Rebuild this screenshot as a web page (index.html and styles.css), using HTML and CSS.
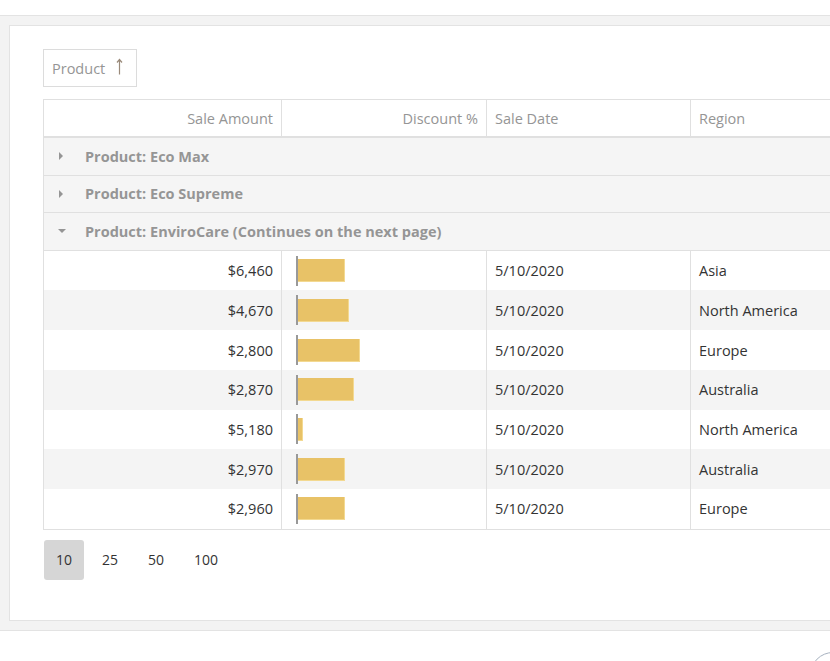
FILE: index.html
```html
<!DOCTYPE html>
<html>
<head>
<meta charset="utf-8">
<link rel="stylesheet" href="styles.css">
</head>
<body>
<div class="top"></div>
<div class="stage">
  <div class="panel">
    <div class="group-panel">
      <div class="group-chip">
        <span>Product</span>
        <svg class="sort" width="7" height="17" viewBox="0 0 7 17"><path d="M3.5 1.5V16.5M1 4.5L3.5 1.5L6 4.5" fill="none" stroke="#9a8a7a" stroke-width="1.2"/></svg>
      </div>
    </div>
    <table class="grid">
      <colgroup>
        <col class="c1"><col class="c2"><col class="c3"><col class="c4">
      </colgroup>
      <thead>
        <tr>
          <th class="r">Sale Amount</th>
          <th class="r">Discount %</th>
          <th>Sale Date</th>
          <th>Region</th>
        </tr>
      </thead>
      <tbody>
        <tr class="grp"><td colspan="4"><span class="tri right"></span>Product: Eco Max</td></tr>
        <tr class="grp"><td colspan="4"><span class="tri right"></span>Product: Eco Supreme</td></tr>
        <tr class="grp"><td colspan="4"><span class="tri down"></span>Product: EnviroCare (Continues on the next page)</td></tr>
        <tr class="row"><td class="r">$6,460</td><td><div class="bar"><i style="width:47px"></i></div></td><td>5/10/2020</td><td>Asia</td></tr>
        <tr class="row alt"><td class="r">$4,670</td><td><div class="bar"><i style="width:51px"></i></div></td><td>5/10/2020</td><td>North America</td></tr>
        <tr class="row"><td class="r">$2,800</td><td><div class="bar"><i style="width:62px"></i></div></td><td>5/10/2020</td><td>Europe</td></tr>
        <tr class="row alt"><td class="r">$2,870</td><td><div class="bar"><i style="width:56px"></i></div></td><td>5/10/2020</td><td>Australia</td></tr>
        <tr class="row"><td class="r">$5,180</td><td><div class="bar"><i style="width:5px"></i></div></td><td>5/10/2020</td><td>North America</td></tr>
        <tr class="row alt"><td class="r">$2,970</td><td><div class="bar"><i style="width:47px"></i></div></td><td>5/10/2020</td><td>Australia</td></tr>
        <tr class="row"><td class="r">$2,960</td><td><div class="bar"><i style="width:47px"></i></div></td><td>5/10/2020</td><td>Europe</td></tr>
      </tbody>
    </table>
    <div class="pager">
      <span class="page sel">10</span>
      <span class="page">25</span>
      <span class="page">50</span>
      <span class="page">100</span>
    </div>
  </div>
</div>
<div class="fab"></div>
</body>
</html>
```
FILE: styles.css
```css
html, body {
  margin: 0;
  padding: 0;
  overflow: hidden;
  background: #fff;
  font-family: "Segoe UI", "Open Sans", sans-serif;
  font-size: 14.5px;
  color: #333;
}
.top {
  height: 15px;
}
.stage {
  border-top: 1px solid #e3e3e3;
  border-bottom: 1px solid #e3e3e3;
  background: #f3f3f3;
  padding: 9px 0 9px 9px;
  width: 1100px;
}
.panel {
  background: #fff;
  border: 1px solid #e3e3e3;
  padding: 23px 0 40px 33px;
}
.group-panel {
  display: flex;
  margin-bottom: 12px;
}
.group-chip {
  display: flex;
  align-items: center;
  gap: 11px;
  height: 36px;
  padding: 0 13px 0 8px;
  border: 1px solid #dcdcdc;
  color: #959595;
}
.sort {
  display: block;
  margin-top: -4px;
}
.grid {
  border-collapse: collapse;
  table-layout: fixed;
  width: 1000px;
  border: 1px solid #e0e0e0;
}
.c1 { width: 238px; }
.c2 { width: 205px; }
.c3 { width: 204px; }
.c4 { width: 353px; }
.grid th {
  height: 36px;
  padding: 0 8px;
  font-weight: normal;
  color: #959595;
  text-align: left;
  border-right: 1px solid #e0e0e0;
  border-bottom: 2px solid #e0e0e0;
}
.grid .r { text-align: right; }
.grp td {
  background: #f5f5f5;
  height: 36.6px;
  padding: 0 0 0 14px;
  font-weight: 700;
  color: #959595;
  border-bottom: 1px solid #e0e0e0;
}
.tri {
  display: inline-block;
  width: 0;
  height: 0;
  vertical-align: middle;
  position: relative;
  top: -2px;
}
.tri.right {
  border-top: 4px solid transparent;
  border-bottom: 4px solid transparent;
  border-left: 4px solid #959595;
  margin-left: 1px;
  margin-right: 22px;
}
.tri.down {
  border-left: 4px solid transparent;
  border-right: 4px solid transparent;
  border-top: 4px solid #959595;
  margin-right: 19px;
}
.row td {
  height: 39.7px;
  padding: 0 8px;
  border-right: 1px solid #e0e0e0;
  white-space: nowrap;
}
.row.alt td { background: #f4f4f4; }
.bar {
  display: flex;
  align-items: center;
  height: 30px;
  margin-left: 6px;
  border-left: 2px solid #999;
}
.bar i {
  display: block;
  height: 23px;
  background: #e8c267;
  box-shadow: inset -1px 0 0 #f3d991, inset 0 -1px 0 #f3d991;
}
.pager {
  display: flex;
  gap: 6px;
  margin-top: 10px;
  font-size: 14px;
}
.page {
  display: flex;
  align-items: center;
  justify-content: center;
  min-width: 16px;
  height: 40px;
  padding: 0 12px;
  border-radius: 3px;
  color: #333;
}
.page.sel {
  background: #d6d6d6;
}
.page:first-child {
  margin-left: 1px;
}
.fab {
  position: absolute;
  left: 810px;
  top: 652px;
  width: 44px;
  height: 44px;
  border-radius: 50%;
  border: 1px solid #a7b2c0;
  background: #fff;
}
```
